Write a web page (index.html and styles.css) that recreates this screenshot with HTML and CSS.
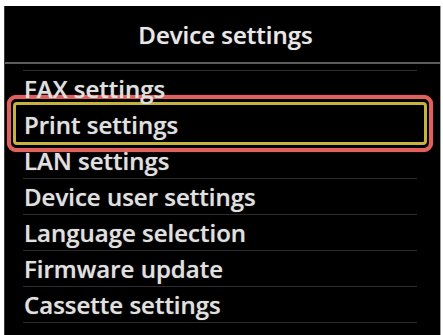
FILE: index.html
```html
<!DOCTYPE html>
<html>
<head>
<meta charset="utf-8">
<link rel="stylesheet" href="styles.css">
</head>
<body>
<div class="screen">
  <div class="header"><span class="title">Device settings</span></div>
  <div class="divider"></div>
  <ul class="menu">
    <li class="item"><span class="label">FAX settings</span></li>
    <li class="item selected"><span class="label">Print settings</span></li>
    <li class="item"><span class="label">LAN settings</span></li>
    <li class="item"><span class="label">Device user settings</span></li>
    <li class="item"><span class="label">Language selection</span></li>
    <li class="item"><span class="label">Firmware update</span></li>
    <li class="item last"><span class="label">Cassette settings</span></li>
  </ul>
</div>
</body>
</html>
```
FILE: styles.css
```css
html, body {
  margin: 0;
  padding: 0;
  background: #ffffff;
}
body {
  padding: 6px 0 0 4px;
  font-family: "Open Sans", "DejaVu Sans", sans-serif;
  font-weight: 600;
}
.screen {
  width: 437px;
  height: 329px;
  background: #000;
  border-left: 1px solid #3a3a3a;
  border-right: 1px solid #9a9a9a;
  box-sizing: border-box;
  overflow: hidden;
}
.header {
  height: 56px;
  display: flex;
  align-items: center;
  justify-content: center;
  padding-left: 6px;
  box-sizing: border-box;
}
.title {
  color: #e8e8e8;
  font-size: 24px;
  line-height: 1;
  padding-top: 2px;
  text-shadow: 0 0 1px rgba(255,255,255,0.5);
}
.divider {
  height: 2px;
  background: #5c5c5c;
}
.menu {
  list-style: none;
  margin: 0 23px 0 18px;
  padding: 6px 0 0 0;
}
.item {
  position: relative;
  height: 36px;
  border-top: 1px solid #2b2b2b;
  box-sizing: border-box;
  display: flex;
  align-items: center;
  padding-left: 1px;
}
.item.last {
  border-bottom: 1px solid #2b2b2b;
  height: 37px;
}
.label {
  position: relative;
  z-index: 2;
  color: #e0e0e0;
  font-size: 24px;
  line-height: 1;
  padding-top: 1px;
  text-shadow: 0 0 1px rgba(255,255,255,0.5);
}
.item.selected::before {
  content: "";
  position: absolute;
  z-index: 1;
  top: -12px;
  bottom: -10px;
  left: -16px;
  right: -16px;
  border: 4px solid #e0615c;
  border-radius: 9px;
  background: #000;
  box-shadow: 0 0 1px #e0615c;
}
.item.selected::after {
  content: "";
  position: absolute;
  z-index: 1;
  top: -5px;
  bottom: -3px;
  left: -10px;
  right: -10px;
  border: 3px solid #c6b33f;
  border-radius: 4px;
}
```
